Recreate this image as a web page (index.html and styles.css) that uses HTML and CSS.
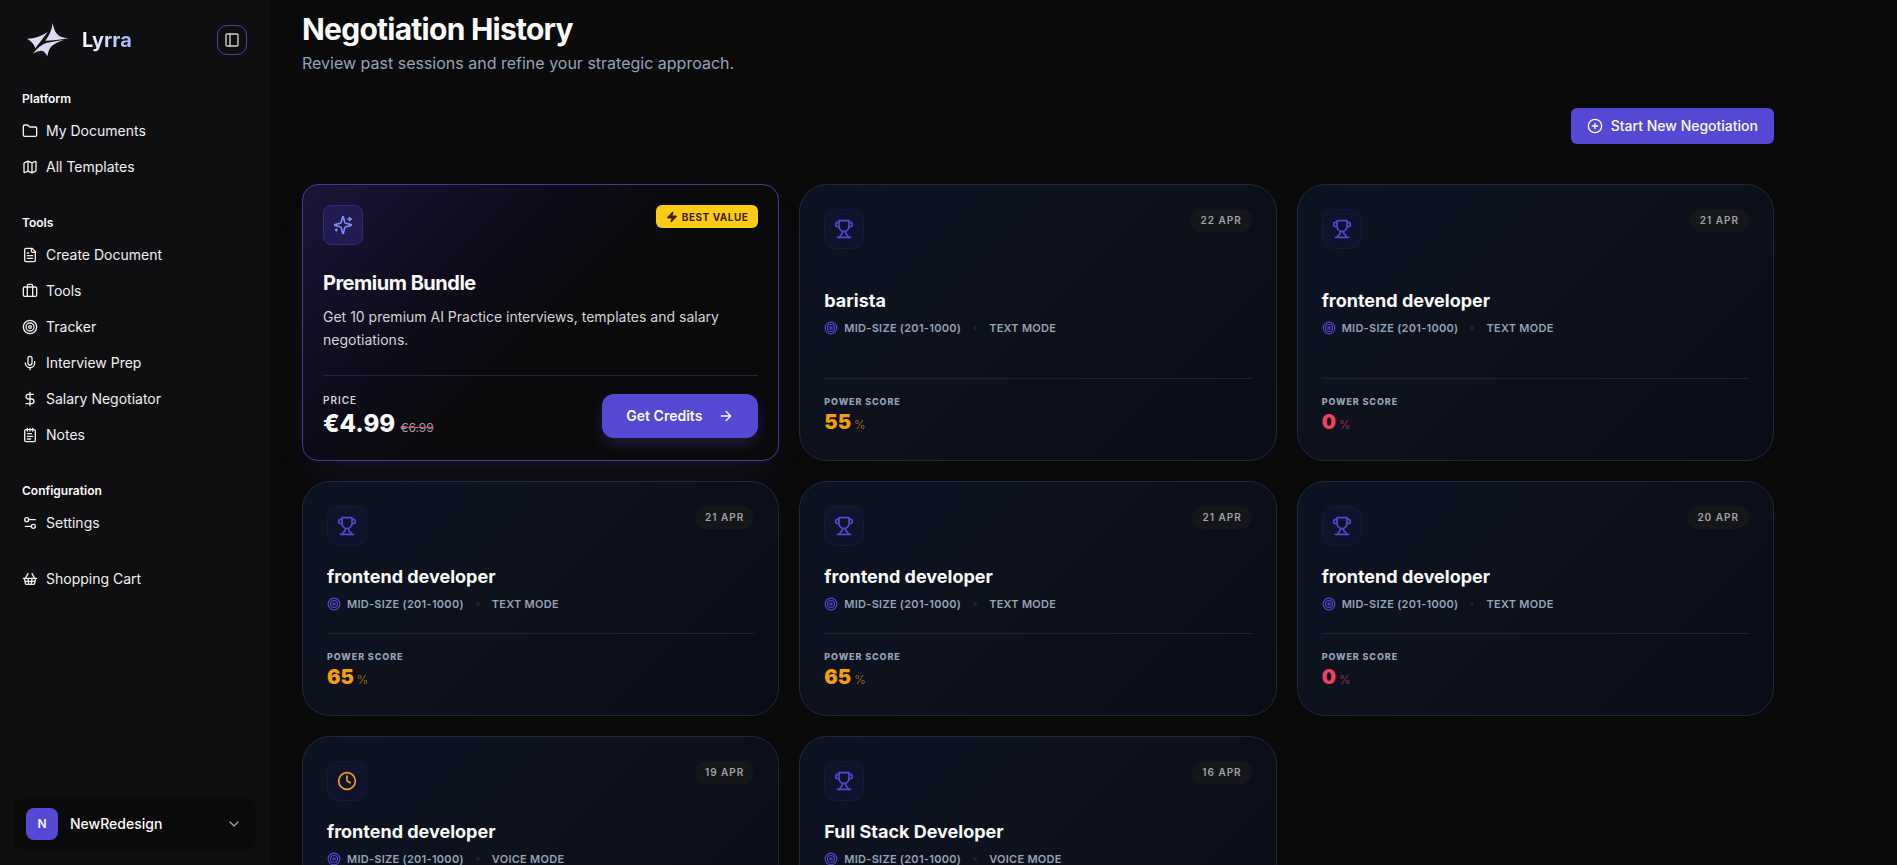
FILE: index.html
```
<!DOCTYPE html>
<html lang="en">
<head>
    <meta charset="UTF-8">
    <meta name="viewport" content="width=device-width, initial-scale=1.0">
    <title>Lyrra - Negotiation History</title>
    <link rel="stylesheet" href="styles.css">
</head>
<body>
    <!-- shared icons -->
    <svg class="sprite" aria-hidden="true">
        <symbol id="trophy" viewBox="0 0 24 24"><path d="M6 9H4.5a2.5 2.5 0 0 1 0-5H6M18 9h1.5a2.5 2.5 0 0 0 0-5H18M4 22h16M10 14.66V17c0 .55-.47.98-.97 1.21C7.85 18.75 7 20.24 7 22M14 14.66V17c0 .55.47.98.97 1.21C16.15 18.75 17 20.24 17 22M18 2H6v7a6 6 0 0 0 12 0V2Z"/></symbol>
        <symbol id="target" viewBox="0 0 24 24"><circle cx="12" cy="12" r="10"/><circle cx="12" cy="12" r="6"/><circle cx="12" cy="12" r="2"/></symbol>
        <symbol id="clock" viewBox="0 0 24 24"><circle cx="12" cy="12" r="10"/><path d="M12 6v6l4 2"/></symbol>
    </svg>

    <div class="layout">
        <aside class="sidebar">
            <div class="brand">
                <a href="#" class="brand-link">
                    <svg class="logo" viewBox="0 0 126 102" aria-hidden="true">
                        <path d="M0 47Q30 48 62 27Q42 54 25 76Q20 58 0 47Z"/>
                        <path d="M77 0Q82 28 94 37Q104 45 125 46Q84 53 55 53Q74 28 77 0Z"/>
                        <path d="M18 92Q38 66 58 60Q84 54 112 50Q86 58 74 70Q64 80 61 100Q54 85 44 83Q32 82 18 92Z"/>
                    </svg>
                    <span class="brand-name">Lyrra</span>
                </a>
                <button type="button" class="toggle" aria-label="Toggle sidebar">
                    <svg class="icon" viewBox="0 0 24 24"><rect x="3" y="3" width="18" height="18" rx="2"/><path d="M9 3v18"/></svg>
                </button>
            </div>

            <nav class="nav">
                <div class="nav-group">
                    <h2>Platform</h2>
                    <a href="#"><svg class="icon" viewBox="0 0 24 24"><path d="M20 20a2 2 0 0 0 2-2V8a2 2 0 0 0-2-2h-7.9a2 2 0 0 1-1.69-.9L9.6 3.9A2 2 0 0 0 7.93 3H4a2 2 0 0 0-2 2v13a2 2 0 0 0 2 2Z"/></svg>My Documents</a>
                    <a href="#"><svg class="icon" viewBox="0 0 24 24"><path d="M14.106 5.553a2 2 0 0 0 1.788 0l3.659-1.83A1 1 0 0 1 21 4.619v12.764a1 1 0 0 1-.553.894l-4.553 2.277a2 2 0 0 1-1.788 0l-4.212-2.106a2 2 0 0 0-1.788 0l-3.659 1.83A1 1 0 0 1 3 19.381V6.618a1 1 0 0 1 .553-.894l4.553-2.277a2 2 0 0 1 1.788 0zM15 5.764v15M9 3.236v15"/></svg>All Templates</a>
                </div>
                <div class="nav-group">
                    <h2>Tools</h2>
                    <a href="#"><svg class="icon" viewBox="0 0 24 24"><path d="M15 2H6a2 2 0 0 0-2 2v16a2 2 0 0 0 2 2h12a2 2 0 0 0 2-2V7ZM14 2v4a2 2 0 0 0 2 2h4M10 9H8M16 13H8M16 17H8"/></svg>Create Document</a>
                    <a href="#"><svg class="icon" viewBox="0 0 24 24"><path d="M16 20V4a2 2 0 0 0-2-2h-4a2 2 0 0 0-2 2v16"/><rect x="2" y="6" width="20" height="14" rx="2"/></svg>Tools</a>
                    <a href="#"><svg class="icon"><use href="#target"/></svg>Tracker</a>
                    <a href="#"><svg class="icon" viewBox="0 0 24 24"><path d="M12 2a3 3 0 0 0-3 3v7a3 3 0 0 0 6 0V5a3 3 0 0 0-3-3ZM19 10v2a7 7 0 0 1-14 0M12 19v3"/></svg>Interview Prep</a>
                    <a href="#"><svg class="icon" viewBox="0 0 24 24"><path d="M12 2v20M17 5H9.5a3.5 3.5 0 0 0 0 7h5a3.5 3.5 0 0 1 0 7H6"/></svg>Salary Negotiator</a>
                    <a href="#"><svg class="icon" viewBox="0 0 24 24"><path d="M8 2v4M12 2v4M16 2v4M8 10h6M8 14h8M8 18h5"/><rect x="4" y="4" width="16" height="18" rx="2"/></svg>Notes</a>
                </div>
                <div class="nav-group">
                    <h2>Configuration</h2>
                    <a href="#"><svg class="icon" viewBox="0 0 24 24"><path d="M20 7h-9M14 17H5"/><circle cx="17" cy="17" r="3"/><circle cx="7" cy="7" r="3"/></svg>Settings</a>
                </div>
                <div class="nav-group">
                    <a href="#"><svg class="icon" viewBox="0 0 24 24"><path d="m15 11-1 9M19 11l-4-7M2 11h20M3.5 11l1.6 7.4a2 2 0 0 0 2 1.6h9.8a2 2 0 0 0 2-1.6l1.7-7.4M4.5 15.5h15M5 11l4-7M9 11l1 9"/></svg>Shopping Cart</a>
                </div>
            </nav>

            <button type="button" class="user">
                <span class="user-avatar">N</span>
                <span class="user-name">NewRedesign</span>
                <svg class="icon" viewBox="0 0 24 24"><path d="m6 9 6 6 6-6"/></svg>
            </button>
        </aside>

        <main class="main">
            <header class="page-header">
                <h1>Negotiation History</h1>
                <p>Review past sessions and refine your strategic approach.</p>
            </header>
            <div class="actions">
                <button type="button" class="start-btn">
                    <svg class="icon" viewBox="0 0 24 24"><circle cx="12" cy="12" r="10"/><path d="M8 12h8M12 8v8"/></svg>
                    Start New Negotiation
                </button>
            </div>

            <div class="grid">
                <section class="premium">
                    <div class="card-top">
                        <span class="premium-icon"><svg class="icon" viewBox="0 0 24 24"><path d="M9.937 15.5A2 2 0 0 0 8.5 14.063l-6.135-1.582a.5.5 0 0 1 0-.962L8.5 9.936A2 2 0 0 0 9.937 8.5l1.582-6.135a.5.5 0 0 1 .963 0L14.063 8.5A2 2 0 0 0 15.5 9.937l6.135 1.581a.5.5 0 0 1 0 .964L15.5 14.063a2 2 0 0 0-1.437 1.437l-1.582 6.135a.5.5 0 0 1-.963 0zM20 3v4M22 5h-4M4 17v2M5 18H3"/></svg></span>
                        <span class="badge"><svg class="icon" viewBox="0 0 24 24"><path d="M4 14a1 1 0 0 1-.78-1.63l9.9-10.2a.5.5 0 0 1 .86.46l-1.92 6.02A1 1 0 0 0 13 10h7a1 1 0 0 1 .78 1.63l-9.9 10.2a.5.5 0 0 1-.86-.46l1.92-6.02A1 1 0 0 0 11 14z"/></svg>BEST VALUE</span>
                    </div>
                    <h3>Premium Bundle</h3>
                    <p class="premium-text">Get 10 premium AI Practice interviews, templates and salary negotiations.</p>
                    <div class="premium-bottom">
                        <div>
                            <div class="price-label">PRICE</div>
                            <div class="price">€4.99 <del>€6.99</del></div>
                        </div>
                        <button type="button" class="credits-btn">
                            Get Credits
                            <svg class="icon" viewBox="0 0 24 24"><path d="M5 12h14M12 5l7 7-7 7"/></svg>
                        </button>
                    </div>
                </section>

                <article class="card">
                    <div class="card-top">
                        <span class="card-icon"><svg class="icon"><use href="#trophy"/></svg></span>
                        <time class="date">22 APR</time>
                    </div>
                    <div class="card-body">
                        <h3>barista</h3>
                        <div class="meta"><svg class="icon"><use href="#target"/></svg><span>MID-SIZE (201-1000)</span><i class="dot"></i><span>TEXT MODE</span></div>
                    </div>
                    <div class="card-score">
                        <div class="score-label">POWER SCORE</div>
                        <div class="score mid">55<span>%</span></div>
                    </div>
                </article>

                <article class="card">
                    <div class="card-top">
                        <span class="card-icon"><svg class="icon"><use href="#trophy"/></svg></span>
                        <time class="date">21 APR</time>
                    </div>
                    <div class="card-body">
                        <h3>frontend developer</h3>
                        <div class="meta"><svg class="icon"><use href="#target"/></svg><span>MID-SIZE (201-1000)</span><i class="dot"></i><span>TEXT MODE</span></div>
                    </div>
                    <div class="card-score">
                        <div class="score-label">POWER SCORE</div>
                        <div class="score low">0<span>%</span></div>
                    </div>
                </article>

                <article class="card">
                    <div class="card-top">
                        <span class="card-icon"><svg class="icon"><use href="#trophy"/></svg></span>
                        <time class="date">21 APR</time>
                    </div>
                    <div class="card-body">
                        <h3>frontend developer</h3>
                        <div class="meta"><svg class="icon"><use href="#target"/></svg><span>MID-SIZE (201-1000)</span><i class="dot"></i><span>TEXT MODE</span></div>
                    </div>
                    <div class="card-score">
                        <div class="score-label">POWER SCORE</div>
                        <div class="score mid">65<span>%</span></div>
                    </div>
                </article>

                <article class="card">
                    <div class="card-top">
                        <span class="card-icon"><svg class="icon"><use href="#trophy"/></svg></span>
                        <time class="date">21 APR</time>
                    </div>
                    <div class="card-body">
                        <h3>frontend developer</h3>
                        <div class="meta"><svg class="icon"><use href="#target"/></svg><span>MID-SIZE (201-1000)</span><i class="dot"></i><span>TEXT MODE</span></div>
                    </div>
                    <div class="card-score">
                        <div class="score-label">POWER SCORE</div>
                        <div class="score mid">65<span>%</span></div>
                    </div>
                </article>

                <article class="card">
                    <div class="card-top">
                        <span class="card-icon"><svg class="icon"><use href="#trophy"/></svg></span>
                        <time class="date">20 APR</time>
                    </div>
                    <div class="card-body">
                        <h3>frontend developer</h3>
                        <div class="meta"><svg class="icon"><use href="#target"/></svg><span>MID-SIZE (201-1000)</span><i class="dot"></i><span>TEXT MODE</span></div>
                    </div>
                    <div class="card-score">
                        <div class="score-label">POWER SCORE</div>
                        <div class="score low">0<span>%</span></div>
                    </div>
                </article>

                <article class="card">
                    <div class="card-top">
                        <span class="card-icon pending"><svg class="icon"><use href="#clock"/></svg></span>
                        <time class="date">19 APR</time>
                    </div>
                    <div class="card-body">
                        <h3>frontend developer</h3>
                        <div class="meta"><svg class="icon"><use href="#target"/></svg><span>MID-SIZE (201-1000)</span><i class="dot"></i><span>VOICE MODE</span></div>
                    </div>
                    <div class="card-score"></div>
                </article>

                <article class="card">
                    <div class="card-top">
                        <span class="card-icon"><svg class="icon"><use href="#trophy"/></svg></span>
                        <time class="date">16 APR</time>
                    </div>
                    <div class="card-body">
                        <h3>Full Stack Developer</h3>
                        <div class="meta"><svg class="icon"><use href="#target"/></svg><span>MID-SIZE (201-1000)</span><i class="dot"></i><span>VOICE MODE</span></div>
                    </div>
                    <div class="card-score"></div>
                </article>
            </div>
        </main>
    </div>
</body>
</html>
```
FILE: styles.css
```
* {
    box-sizing: border-box;
}
body {
    margin: 0;
    background: #0a0a0a;
    color: #fafafa;
    font-family: Inter, "Liberation Sans", sans-serif;
    font-size: 14px;
    line-height: 20px;
}
h1, h2, h3, p {
    margin: 0;
}
a {
    color: inherit;
    text-decoration: none;
}
button {
    border: 0;
    color: inherit;
    font: inherit;
    cursor: pointer;
}
.sprite {
    display: none;
}
.icon {
    width: 16px;
    height: 16px;
    flex-shrink: 0;
    fill: none;
    stroke: currentColor;
    stroke-width: 2;
    stroke-linecap: round;
    stroke-linejoin: round;
}
.layout {
    display: flex;
    height: 100vh;
    overflow: hidden;
}

/* sidebar */
.sidebar {
    width: 270px;
    flex-shrink: 0;
    display: flex;
    flex-direction: column;
    padding: 16px 14px;
    background: #0f0f11;
}
.brand {
    display: flex;
    align-items: center;
    justify-content: space-between;
    height: 48px;
    padding: 0 9px 0 13px;
}
.brand-link {
    display: flex;
    align-items: center;
    gap: 13px;
}
.logo {
    width: 42px;
    height: 34px;
    fill: #dcd9f2;
}
.brand-name {
    font-size: 20px;
    line-height: 28px;
    font-weight: 700;
    background: linear-gradient(90deg, #fff, #a5b4fc);
    background-clip: text;
    -webkit-background-clip: text;
    color: transparent;
}
.toggle {
    display: flex;
    align-items: center;
    justify-content: center;
    width: 30px;
    height: 30px;
    padding: 0;
    border: 1px solid #4a3fae;
    border-radius: 10px;
    background: transparent;
    color: #d6d3d1;
}
.nav {
    display: flex;
    flex-direction: column;
    gap: 24px;
    flex: 1;
    padding-top: 19px;
}
.nav-group {
    display: flex;
    flex-direction: column;
    gap: 4px;
}
.nav-group h2 {
    padding: 0 8px;
    margin-bottom: -4px;
    font-size: 12px;
    line-height: 32px;
    font-weight: 600;
}
.nav-group a {
    display: flex;
    align-items: center;
    gap: 8px;
    height: 32px;
    padding: 0 8px;
    color: #f0f0f2;
}
.user {
    display: flex;
    align-items: center;
    gap: 12px;
    height: 50px;
    padding: 0 14px 0 12px;
    border-radius: 8px;
    background: #0a0a0a;
    text-align: left;
}
.user-avatar {
    width: 32px;
    height: 32px;
    border-radius: 8px;
    background: #5548d3;
    font-size: 12px;
    line-height: 32px;
    font-weight: 600;
    text-align: center;
}
.user-name {
    flex: 1;
    font-weight: 500;
}
.user .icon {
    color: #a1a1aa;
}

/* page */
.main {
    flex: 1;
    min-width: 0;
    max-width: 1536px;
    padding: 11px 32px 0;
    overflow: hidden;
}
.page-header h1 {
    font-size: 30px;
    line-height: 36px;
    font-weight: 700;
    letter-spacing: -0.025em;
}
.page-header p {
    margin-top: 4px;
    font-size: 16px;
    line-height: 24px;
    color: #94a3b8;
}
.actions {
    display: flex;
    justify-content: flex-end;
    margin: 33px 0 40px;
}
.start-btn {
    display: flex;
    align-items: center;
    gap: 8px;
    height: 36px;
    padding: 0 16px;
    border-radius: 6px;
    background: #5548d3;
    font-weight: 500;
}
.grid {
    display: grid;
    grid-template-columns: repeat(3, 1fr);
    gap: 20px;
}

/* cards */
.card,
.premium {
    display: flex;
    flex-direction: column;
    justify-content: space-between;
    border: 1px solid #20283a;
}
.card {
    min-height: 235px;
    padding: 24px;
    border-radius: 28px;
    background: linear-gradient(135deg, #0b1322, #0d111b 50%, #0a0d18);
}
.card-top {
    display: flex;
    align-items: flex-start;
    justify-content: space-between;
}
.card-icon,
.premium-icon {
    display: flex;
    align-items: center;
    justify-content: center;
    width: 40px;
    height: 40px;
    border: 1px solid #17183a;
    border-radius: 12px;
    background: #10132b;
    color: #5548d3;
}
.card-icon .icon,
.premium-icon .icon {
    width: 20px;
    height: 20px;
}
.card-icon.pending {
    color: #f0a020;
}
.date {
    padding: 0 10px;
    border-radius: 12px;
    background: #14161a;
    color: #a1a1aa;
    font-size: 10px;
    line-height: 23px;
    font-weight: 600;
    letter-spacing: 0.1em;
}
.card-body {
    padding-bottom: 4px;
}
.card h3 {
    font-size: 18px;
    line-height: 28px;
    font-weight: 700;
}
.meta {
    display: flex;
    align-items: center;
    margin-top: 5px;
    color: #94a3b8;
    font-size: 11px;
    line-height: 16px;
    font-weight: 600;
    letter-spacing: 0.025em;
}
.meta .icon {
    width: 14px;
    height: 14px;
    margin-right: 6px;
    color: #5548d3;
}
.meta .dot {
    width: 4px;
    height: 4px;
    margin: 0 12px;
    border-radius: 50%;
    background: #1e2330;
}
.card-score {
    min-height: 58px;
    padding-top: 16px;
    border-top: 1px solid #1e2330;
}
.score-label {
    color: #94a3b8;
    font-size: 9px;
    line-height: 13px;
    font-weight: 800;
    letter-spacing: 0.1em;
}
.score {
    font-size: 20px;
    line-height: 28px;
    font-weight: 900;
}
.score span {
    margin-left: 3px;
    font-size: 12px;
    line-height: 12px;
    font-weight: 400;
    opacity: 0.6;
}
.score.mid {
    color: #f59e0b;
}
.score.low {
    color: #f43f5e;
}

/* premium offer */
.premium {
    padding: 20px;
    border-color: #43389e;
    border-radius: 16px;
    background: linear-gradient(135deg, #1a1537, #0d0b18 35%, #0a0a0a 55%);
    box-shadow: 0 20px 40px -12px rgba(85, 72, 211, 0.15);
}
.premium-icon {
    border-color: #322a78;
    border-radius: 8px;
    background: #211b50;
    color: #818cf8;
}
.badge {
    display: flex;
    align-items: center;
    gap: 4px;
    height: 23px;
    padding: 0 10px;
    border-radius: 6px;
    background: #facc15;
    color: #422006;
    font-size: 10px;
    font-weight: 700;
    letter-spacing: 0.05em;
}
.badge .icon {
    width: 12px;
    height: 12px;
    fill: currentColor;
}
.premium h3 {
    margin-top: 24px;
    font-size: 20px;
    line-height: 28px;
    font-weight: 700;
    letter-spacing: -0.025em;
}
.premium-text {
    margin-top: 8px;
    line-height: 23px;
    color: #d4d4d8;
}
.premium-bottom {
    display: flex;
    align-items: center;
    justify-content: space-between;
    margin-top: 24px;
    padding-top: 16px;
    border-top: 1px solid #272148;
}
.price-label {
    color: #d4d4d8;
    font-size: 10px;
    line-height: 16px;
    font-weight: 600;
    letter-spacing: 0.1em;
}
.price {
    font-size: 24px;
    line-height: 32px;
    font-weight: 800;
}
.price del {
    color: #a1a1aa;
    font-size: 12px;
    line-height: 12px;
    font-weight: 400;
    text-decoration-color: #f43f5e;
}
.credits-btn {
    display: flex;
    align-items: center;
    gap: 16px;
    height: 44px;
    padding: 0 24px;
    border-radius: 12px;
    background: #5548d3;
    box-shadow: 0 6px 14px rgba(85, 72, 211, 0.25);
    font-weight: 600;
}
```
